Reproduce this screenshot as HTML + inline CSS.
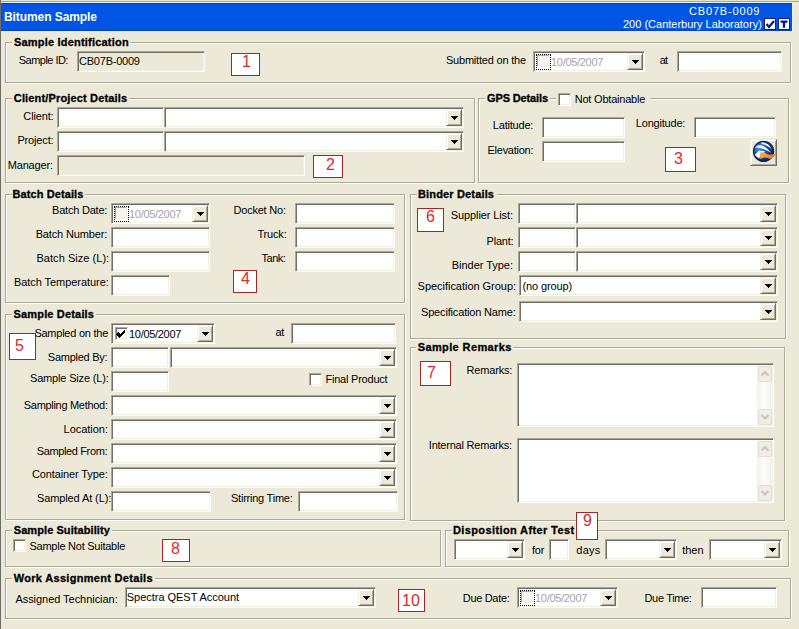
<!DOCTYPE html><html><head><meta charset="utf-8"><style>
*{box-sizing:border-box;margin:0;padding:0}
html,body{width:799px;height:629px;overflow:hidden;background:#ECE9D8;font-family:"Liberation Sans",sans-serif;font-size:11px;color:#000}
div{position:absolute}
.g{border:1px solid #ACA899;box-shadow:inset 1px 1px 0 #fff,1px 1px 0 #fff}
.gt{font-weight:bold;font-size:11px;line-height:13px;white-space:nowrap;-webkit-text-stroke:0.3px #000}
.lb{line-height:13px;white-space:nowrap}
.e{background:#fff;border:1px solid;border-color:#ACA899 #fff #fff #ACA899;box-shadow:inset 1px 1px 0 #716F64,inset -1px -1px 0 #F1EFE2}
.ed{background:#ECE9D8;border:1px solid;border-color:#ACA899 #fff #fff #ACA899;box-shadow:inset 1px 1px 0 #716F64,inset -1px -1px 0 #F1EFE2}
.b{background:#ECE9D8;border:1px solid;border-color:#F1EFE2 #716F64 #716F64 #F1EFE2;box-shadow:inset 1px 1px 0 #fff,inset -1px -1px 0 #ACA899}
.rb{background:#fff;border:1px solid #A82424}
.rd{color:#DC2A2A;font-size:16px;line-height:18px;white-space:nowrap}
.chk{width:13px;height:13px;background:#fff;border:1px solid;border-color:#ACA899 #fff #fff #ACA899;box-shadow:inset 1px 1px 0 #716F64,inset -1px -1px 0 #F1EFE2}
.cbd{width:12px;height:12px;background:#F5F4EF;border:1px solid;border-color:#ACA899 #F1EFE2 #F1EFE2 #ACA899}
.foc{border:1px dotted #000}
.hdr{background:#0055E5;border-top:1px solid #0046C0;border-bottom:1px solid #0044B4}
.ht{color:#fff;font-weight:bold;font-size:12px;line-height:13px;white-space:nowrap}
.hs{color:#fff;font-size:11px;line-height:13px;white-space:nowrap}
.hi{width:12px;height:12px;background:#fff;border:1px solid #0A1F78}
.sb{background:linear-gradient(90deg,#F3F1EA,#FDFDFB 50%,#F3F1EA)}
.sbb{left:1px;width:14px;height:16px;background:#EFEDE4;border:1px solid #E2E0D6;border-radius:2px}
</style></head><body>
<div style="left:0;top:0;width:799px;height:1px;background:#E6E3D3"></div>
<div style="left:0;top:1px;width:799px;height:1px;background:#A4A5A3"></div>
<div style="left:0;top:2px;width:793px;height:1px;background:#E4F2FA"></div>
<div style="left:792px;top:2px;width:1px;height:30px;background:#E4F2FA"></div>
<div class="hdr" style="left:1px;top:3px;width:791px;height:28px"></div>
<div style="left:1px;top:31px;width:792px;height:1px;background:#D8ECF6"></div>
<div style="left:0;top:0;width:1px;height:629px;background:#6F6E65"></div>
<div class="hi" style="left:764px;top:18px"><svg width="12" height="12" style="position:absolute;left:-1px;top:-1px"><path d="M2.5 6 L5 9 L10 3" stroke="#0A1F78" stroke-width="2.2" fill="none"/></svg></div>
<div class="hi" style="left:778px;top:18px"><svg width="12" height="12" style="position:absolute;left:-1px;top:-1px"><path d="M2.5 2.5h7v2.2h-2.3v5h-2.4v-5h-2.3z" fill="#0A1F78"/></svg></div>
<div class="g" style="left:5px;top:42px;width:786px;height:41px"></div>
<div class="g" style="left:5px;top:98px;width:470px;height:85px"></div>
<div class="g" style="left:478px;top:98px;width:311px;height:85px"></div>
<div class="g" style="left:5px;top:194px;width:400px;height:109px"></div>
<div class="g" style="left:410px;top:194px;width:376px;height:145px"></div>
<div class="g" style="left:5px;top:314px;width:400px;height:206px"></div>
<div class="g" style="left:410px;top:347px;width:375px;height:174px"></div>
<div class="g" style="left:5px;top:530px;width:436px;height:37px"></div>
<div class="g" style="left:445px;top:530px;width:344px;height:37px"></div>
<div class="g" style="left:5px;top:578px;width:786px;height:41px"></div>
<div style="left:12px;top:42px;width:118px;height:2px;background:#ECE9D8"></div><div style="left:12px;top:98px;width:117px;height:2px;background:#ECE9D8"></div><div style="left:485px;top:98px;width:65px;height:2px;background:#ECE9D8"></div><div style="left:556px;top:98px;width:94px;height:2px;background:#ECE9D8"></div><div style="left:12px;top:194px;width:73px;height:2px;background:#ECE9D8"></div><div style="left:417px;top:194px;width:80px;height:2px;background:#ECE9D8"></div><div style="left:12px;top:314px;width:84px;height:2px;background:#ECE9D8"></div><div style="left:416px;top:347px;width:97px;height:2px;background:#ECE9D8"></div><div style="left:12px;top:530px;width:100px;height:2px;background:#ECE9D8"></div><div style="left:452px;top:530px;width:124px;height:2px;background:#ECE9D8"></div><div style="left:12px;top:578px;width:143px;height:2px;background:#ECE9D8"></div>
<div class="ed" style="left:77px;top:51px;width:128px;height:21px"></div>
<div class="rb" style="left:231px;top:53px;width:29px;height:23px"></div>
<div class="rd" style="left:242px;top:53px">1</div>
<div class="e" style="left:533px;top:51px;width:112px;height:21px"></div>
<div class="cbd" style="left:537px;top:55px"></div>
<div class="foc" style="left:536px;top:54px;width:15px;height:16px"></div>
<div class="b" style="left:627px;top:53px;width:16px;height:17px"><svg width="16" height="17" style="position:absolute;left:-1px;top:-1px"><path d="M5 7h7v1h-1v1h-1v1h-1v1h-1v-1h-1v-1h-1v-1h-1z" fill="#000"/></svg></div>
<div class="e" style="left:677px;top:51px;width:105px;height:21px"></div>
<div class="e" style="left:57px;top:107px;width:107px;height:21px"></div>
<div class="e" style="left:164px;top:107px;width:300px;height:21px"></div>
<div class="b" style="left:446px;top:109px;width:16px;height:17px"><svg width="16" height="17" style="position:absolute;left:-1px;top:-1px"><path d="M5 7h7v1h-1v1h-1v1h-1v1h-1v-1h-1v-1h-1v-1h-1z" fill="#000"/></svg></div>
<div class="e" style="left:57px;top:131px;width:107px;height:21px"></div>
<div class="e" style="left:164px;top:131px;width:300px;height:21px"></div>
<div class="b" style="left:446px;top:133px;width:16px;height:17px"><svg width="16" height="17" style="position:absolute;left:-1px;top:-1px"><path d="M5 7h7v1h-1v1h-1v1h-1v1h-1v-1h-1v-1h-1v-1h-1z" fill="#000"/></svg></div>
<div class="ed" style="left:57px;top:155px;width:248px;height:21px"></div>
<div class="rb" style="left:313px;top:155px;width:30px;height:23px"></div>
<div class="rd" style="left:326px;top:156px">2</div>
<div class="chk" style="left:558px;top:93px"></div>
<div class="e" style="left:542px;top:117px;width:83px;height:21px"></div>
<div class="e" style="left:542px;top:141px;width:83px;height:21px"></div>
<div class="e" style="left:694px;top:117px;width:82px;height:21px"></div>
<div class="rb" style="left:665px;top:147px;width:31px;height:25px"></div>
<div class="rd" style="left:674px;top:150px">3</div>
<div class="b" style="left:750px;top:139px;width:27px;height:27px"><svg width="27" height="27" style="position:absolute;left:-1px;top:-1px" viewBox="0 0 27 27"><defs><radialGradient id="gl" cx="30%" cy="35%" r="70%"><stop offset="0" stop-color="#4A98DC"/><stop offset="0.45" stop-color="#1F62AE"/><stop offset="0.8" stop-color="#0F3878"/><stop offset="1" stop-color="#0A2558"/></radialGradient><linearGradient id="or" x1="0" y1="0" x2="1" y2="0"><stop offset="0" stop-color="#F8AE52"/><stop offset="1" stop-color="#EA7020"/></linearGradient></defs><circle cx="13.6" cy="12.4" r="10" fill="url(#gl)" stroke="#0A2456" stroke-width="1.3"/><path d="M11.5 3.3 Q18.5 3.6 22 10.5 Q17.5 5.8 11.5 4.9 Z" fill="#FFFFFF"/><path d="M4.8 8.6 Q9 4.3 14.6 7.8 Q18.2 10 21.2 13.8 Q17 11.6 14.6 10.6 Q9.5 7.9 4.8 8.6 Z" fill="#F2F8FF"/><path d="M9 11.8 L15 12.3 L14 13.8 L10.2 14 L9.6 19.6 Q6.5 18.2 4.8 15.8 Z" fill="#FFFFFF"/><path d="M9.7 13.5 L14.6 13.5 Q17.5 15.8 20 15.8 Q23 15.6 25.6 14.6 Q24.2 19 21 19.7 Q18.5 19.5 16.5 18.7 Q13 18.2 10.4 19.9 Z" fill="url(#or)"/></svg></div>
<div class="e" style="left:111px;top:203px;width:99px;height:21px"></div>
<div class="cbd" style="left:115px;top:207px"></div>
<div class="foc" style="left:114px;top:206px;width:15px;height:16px"></div>
<div class="b" style="left:192px;top:205px;width:16px;height:17px"><svg width="16" height="17" style="position:absolute;left:-1px;top:-1px"><path d="M5 7h7v1h-1v1h-1v1h-1v1h-1v-1h-1v-1h-1v-1h-1z" fill="#000"/></svg></div>
<div class="e" style="left:111px;top:227px;width:99px;height:21px"></div>
<div class="e" style="left:111px;top:251px;width:99px;height:21px"></div>
<div class="e" style="left:111px;top:275px;width:59px;height:21px"></div>
<div class="e" style="left:295px;top:203px;width:100px;height:21px"></div>
<div class="e" style="left:295px;top:227px;width:100px;height:21px"></div>
<div class="e" style="left:295px;top:251px;width:100px;height:21px"></div>
<div class="rb" style="left:233px;top:270px;width:24px;height:23px"></div>
<div class="rd" style="left:241px;top:270px">4</div>
<div class="rb" style="left:417px;top:208px;width:27px;height:24px"></div>
<div class="rd" style="left:426px;top:208px">6</div>
<div class="e" style="left:518px;top:203px;width:58px;height:21px"></div>
<div class="e" style="left:576px;top:203px;width:202px;height:21px"></div>
<div class="b" style="left:760px;top:205px;width:16px;height:17px"><svg width="16" height="17" style="position:absolute;left:-1px;top:-1px"><path d="M5 7h7v1h-1v1h-1v1h-1v1h-1v-1h-1v-1h-1v-1h-1z" fill="#000"/></svg></div>
<div class="e" style="left:518px;top:227px;width:58px;height:21px"></div>
<div class="e" style="left:576px;top:227px;width:202px;height:21px"></div>
<div class="b" style="left:760px;top:229px;width:16px;height:17px"><svg width="16" height="17" style="position:absolute;left:-1px;top:-1px"><path d="M5 7h7v1h-1v1h-1v1h-1v1h-1v-1h-1v-1h-1v-1h-1z" fill="#000"/></svg></div>
<div class="e" style="left:518px;top:251px;width:58px;height:21px"></div>
<div class="e" style="left:576px;top:251px;width:202px;height:21px"></div>
<div class="b" style="left:760px;top:253px;width:16px;height:17px"><svg width="16" height="17" style="position:absolute;left:-1px;top:-1px"><path d="M5 7h7v1h-1v1h-1v1h-1v1h-1v-1h-1v-1h-1v-1h-1z" fill="#000"/></svg></div>
<div class="e" style="left:519px;top:275px;width:259px;height:21px"></div>
<div class="b" style="left:760px;top:277px;width:16px;height:17px"><svg width="16" height="17" style="position:absolute;left:-1px;top:-1px"><path d="M5 7h7v1h-1v1h-1v1h-1v1h-1v-1h-1v-1h-1v-1h-1z" fill="#000"/></svg></div>
<div class="e" style="left:519px;top:301px;width:259px;height:21px"></div>
<div class="b" style="left:760px;top:303px;width:16px;height:17px"><svg width="16" height="17" style="position:absolute;left:-1px;top:-1px"><path d="M5 7h7v1h-1v1h-1v1h-1v1h-1v-1h-1v-1h-1v-1h-1z" fill="#000"/></svg></div>
<div class="rb" style="left:9px;top:333px;width:27px;height:27px"></div>
<div class="rd" style="left:15px;top:337px">5</div>
<div class="e" style="left:111px;top:323px;width:104px;height:21px"></div>
<div class="chk" style="left:115px;top:327px"><svg width="13" height="13" style="position:absolute;left:-1px;top:-1px"><path d="M3 5h1v1h1v1h1v-1h1v-1h1v-1h1v-1h1v3h-1v1h-1v1h-1v1h-1v1h-1v1h-1v-1h-1v-1h-1v-1h-1z" fill="#000"/></svg></div>
<div class="b" style="left:197px;top:325px;width:16px;height:17px"><svg width="16" height="17" style="position:absolute;left:-1px;top:-1px"><path d="M5 7h7v1h-1v1h-1v1h-1v1h-1v-1h-1v-1h-1v-1h-1z" fill="#000"/></svg></div>
<div class="e" style="left:291px;top:323px;width:105px;height:21px"></div>
<div class="e" style="left:111px;top:347px;width:58px;height:21px"></div>
<div class="e" style="left:170px;top:347px;width:227px;height:21px"></div>
<div class="b" style="left:379px;top:349px;width:16px;height:17px"><svg width="16" height="17" style="position:absolute;left:-1px;top:-1px"><path d="M5 7h7v1h-1v1h-1v1h-1v1h-1v-1h-1v-1h-1v-1h-1z" fill="#000"/></svg></div>
<div class="e" style="left:111px;top:371px;width:58px;height:21px"></div>
<div class="chk" style="left:309px;top:373px"></div>
<div class="e" style="left:111px;top:395px;width:286px;height:21px"></div>
<div class="b" style="left:379px;top:397px;width:16px;height:17px"><svg width="16" height="17" style="position:absolute;left:-1px;top:-1px"><path d="M5 7h7v1h-1v1h-1v1h-1v1h-1v-1h-1v-1h-1v-1h-1z" fill="#000"/></svg></div>
<div class="e" style="left:111px;top:419px;width:286px;height:21px"></div>
<div class="b" style="left:379px;top:421px;width:16px;height:17px"><svg width="16" height="17" style="position:absolute;left:-1px;top:-1px"><path d="M5 7h7v1h-1v1h-1v1h-1v1h-1v-1h-1v-1h-1v-1h-1z" fill="#000"/></svg></div>
<div class="e" style="left:111px;top:443px;width:286px;height:21px"></div>
<div class="b" style="left:379px;top:445px;width:16px;height:17px"><svg width="16" height="17" style="position:absolute;left:-1px;top:-1px"><path d="M5 7h7v1h-1v1h-1v1h-1v1h-1v-1h-1v-1h-1v-1h-1z" fill="#000"/></svg></div>
<div class="e" style="left:111px;top:467px;width:286px;height:21px"></div>
<div class="b" style="left:379px;top:469px;width:16px;height:17px"><svg width="16" height="17" style="position:absolute;left:-1px;top:-1px"><path d="M5 7h7v1h-1v1h-1v1h-1v1h-1v-1h-1v-1h-1v-1h-1z" fill="#000"/></svg></div>
<div class="e" style="left:111px;top:491px;width:100px;height:21px"></div>
<div class="e" style="left:298px;top:491px;width:100px;height:21px"></div>
<div class="rb" style="left:420px;top:361px;width:31px;height:25px"></div>
<div class="rd" style="left:427px;top:364px">7</div>
<div class="e" style="left:517px;top:363px;width:257px;height:64px"></div>
<div class="sb" style="left:757px;top:365px;width:15px;height:60px"><div class="sbb" style="top:1px"><svg width="14" height="16" style="position:absolute;left:-1px;top:-1px"><path d="M3.5 9.5 L7 6 L10.5 9.5" stroke="#C8C6BA" stroke-width="2" fill="none"/></svg></div><div class="sbb" style="bottom:0"><svg width="14" height="16" style="position:absolute;left:-1px;top:-1px"><path d="M3.5 6 L7 9.5 L10.5 6" stroke="#C8C6BA" stroke-width="2" fill="none"/></svg></div></div>
<div class="e" style="left:517px;top:438px;width:257px;height:65px"></div>
<div class="sb" style="left:757px;top:440px;width:15px;height:61px"><div class="sbb" style="top:1px"><svg width="14" height="16" style="position:absolute;left:-1px;top:-1px"><path d="M3.5 9.5 L7 6 L10.5 9.5" stroke="#C8C6BA" stroke-width="2" fill="none"/></svg></div><div class="sbb" style="bottom:0"><svg width="14" height="16" style="position:absolute;left:-1px;top:-1px"><path d="M3.5 6 L7 9.5 L10.5 6" stroke="#C8C6BA" stroke-width="2" fill="none"/></svg></div></div>
<div class="chk" style="left:13px;top:539px"></div>
<div class="rb" style="left:162px;top:539px;width:28px;height:23px"></div>
<div class="rd" style="left:171px;top:540px">8</div>
<div class="e" style="left:454px;top:539px;width:71px;height:21px"></div>
<div class="b" style="left:507px;top:541px;width:16px;height:17px"><svg width="16" height="17" style="position:absolute;left:-1px;top:-1px"><path d="M5 7h7v1h-1v1h-1v1h-1v1h-1v-1h-1v-1h-1v-1h-1z" fill="#000"/></svg></div>
<div class="e" style="left:549px;top:539px;width:20px;height:21px"></div>
<div class="e" style="left:605px;top:539px;width:72px;height:21px"></div>
<div class="b" style="left:659px;top:541px;width:16px;height:17px"><svg width="16" height="17" style="position:absolute;left:-1px;top:-1px"><path d="M5 7h7v1h-1v1h-1v1h-1v1h-1v-1h-1v-1h-1v-1h-1z" fill="#000"/></svg></div>
<div class="e" style="left:709px;top:539px;width:73px;height:21px"></div>
<div class="b" style="left:764px;top:541px;width:16px;height:17px"><svg width="16" height="17" style="position:absolute;left:-1px;top:-1px"><path d="M5 7h7v1h-1v1h-1v1h-1v1h-1v-1h-1v-1h-1v-1h-1z" fill="#000"/></svg></div>
<div class="e" style="left:125px;top:587px;width:251px;height:21px"></div>
<div class="b" style="left:358px;top:589px;width:16px;height:17px"><svg width="16" height="17" style="position:absolute;left:-1px;top:-1px"><path d="M5 7h7v1h-1v1h-1v1h-1v1h-1v-1h-1v-1h-1v-1h-1z" fill="#000"/></svg></div>
<div class="rb" style="left:398px;top:589px;width:27px;height:23px"></div>
<div class="rd" style="left:402px;top:592px">10</div>
<div class="e" style="left:517px;top:587px;width:101px;height:21px"></div>
<div class="cbd" style="left:521px;top:591px"></div>
<div class="foc" style="left:520px;top:590px;width:15px;height:16px"></div>
<div class="b" style="left:600px;top:589px;width:16px;height:17px"><svg width="16" height="17" style="position:absolute;left:-1px;top:-1px"><path d="M5 7h7v1h-1v1h-1v1h-1v1h-1v-1h-1v-1h-1v-1h-1z" fill="#000"/></svg></div>
<div class="e" style="left:701px;top:587px;width:76px;height:21px"></div>
<div class="rb" style="left:576px;top:512px;width:22px;height:28px"></div>
<div class="rd" style="left:583px;top:512px">9</div>
<div class="ht" style="left:4.00px;top:11px;letter-spacing:-0.077px;">Bitumen Sample</div>
<div class="hs" style="left:689.00px;top:5px;letter-spacing:0.833px;">CB07B-0009</div>
<div class="hs" style="left:623.00px;top:18px;">200 (Canterbury Laboratory)</div>
<div class="gt" style="left:14.00px;top:36px;letter-spacing:0.2px;">Sample Identification</div>
<div class="lb" style="left:18.80px;top:54px;letter-spacing:-0.533px;">Sample ID:</div>
<div class="lb" style="left:445.90px;top:54px;letter-spacing:-0.193px;">Submitted on the</div>
<div class="lb" style="left:659.70px;top:54px;letter-spacing:-0.7px;">at</div>
<div class="gt" style="left:13.80px;top:92px;letter-spacing:0.152px;">Client/Project Details</div>
<div class="lb" style="right:745.5px;top:110px;letter-spacing:-0.15px">Client:</div>
<div class="lb" style="right:745.5px;top:134px;letter-spacing:-0.15px">Project:</div>
<div class="lb" style="left:7.70px;top:159px;letter-spacing:-0.171px;">Manager:</div>
<div class="gt" style="left:487.00px;top:92px;letter-spacing:-0.13px;">GPS Details</div>
<div class="lb" style="left:574.70px;top:93px;letter-spacing:-0.208px;">Not Obtainable</div>
<div class="lb" style="left:492.80px;top:119px;letter-spacing:-0.2px;">Latitude:</div>
<div class="lb" style="left:487.50px;top:144px;letter-spacing:-0.256px;">Elevation:</div>
<div class="lb" style="left:635.80px;top:117px;letter-spacing:-0.2px;">Longitude:</div>
<div class="gt" style="left:12.50px;top:188px;letter-spacing:0.092px;">Batch Details</div>
<div class="lb" style="left:52.00px;top:204px;letter-spacing:-0.21px;">Batch Date:</div>
<div class="lb" style="left:35.70px;top:228px;letter-spacing:-0.15px;">Batch Number:</div>
<div class="lb" style="left:36.50px;top:252px;letter-spacing:0.036px;">Batch Size (L):</div>
<div class="lb" style="left:13.90px;top:276px;letter-spacing:-0.053px;">Batch Temperature:</div>
<div class="lb" style="left:233.50px;top:204px;letter-spacing:-0.211px;">Docket No:</div>
<div class="lb" style="left:257.40px;top:228px;letter-spacing:-0.16px;">Truck:</div>
<div class="lb" style="left:261.50px;top:252px;letter-spacing:-0.475px;">Tank:</div>
<div class="gt" style="left:418.00px;top:188px;letter-spacing:0.154px;">Binder Details</div>
<div class="lb" style="left:450.80px;top:209px;letter-spacing:-0.108px;">Supplier List:</div>
<div class="lb" style="left:486.60px;top:235px;letter-spacing:-0.24px;">Plant:</div>
<div class="lb" style="left:451.80px;top:259px;letter-spacing:-0.036px;">Binder Type:</div>
<div class="lb" style="left:417.60px;top:280px;letter-spacing:-0.032px;">Specification Group:</div>
<div class="lb" style="left:421.00px;top:306px;letter-spacing:-0.167px;">Specification Name:</div>
<div class="gt" style="left:13.50px;top:308px;letter-spacing:0.169px;">Sample Details</div>
<div class="lb" style="left:34.40px;top:327px;letter-spacing:-0.246px;">Sampled on the</div>
<div class="lb" style="left:275.60px;top:326px;letter-spacing:-0.4px;">at</div>
<div class="lb" style="left:47.80px;top:351px;letter-spacing:-0.25px;">Sampled By:</div>
<div class="lb" style="left:30.00px;top:372px;letter-spacing:-0.173px;">Sample Size (L):</div>
<div class="lb" style="left:325.50px;top:373px;letter-spacing:-0.225px;">Final Product</div>
<div class="lb" style="left:23.80px;top:399px;letter-spacing:-0.3px;">Sampling Method:</div>
<div class="lb" style="left:63.60px;top:423px;letter-spacing:-0.037px;">Location:</div>
<div class="lb" style="left:36.80px;top:445px;letter-spacing:-0.375px;">Sampled From:</div>
<div class="lb" style="left:31.90px;top:468px;letter-spacing:-0.114px;">Container Type:</div>
<div class="lb" style="left:36.90px;top:492px;letter-spacing:-0.1px;">Sampled At (L):</div>
<div class="lb" style="left:231.00px;top:492px;letter-spacing:-0.231px;">Stirring Time:</div>
<div class="gt" style="left:417.70px;top:341px;letter-spacing:0.385px;">Sample Remarks</div>
<div class="lb" style="left:466.60px;top:364px;letter-spacing:-0.186px;">Remarks:</div>
<div class="lb" style="left:428.80px;top:439px;letter-spacing:-0.219px;">Internal Remarks:</div>
<div class="gt" style="left:13.75px;top:524px;letter-spacing:0.074px;">Sample Suitability</div>
<div class="lb" style="left:29.50px;top:540px;letter-spacing:-0.25px;">Sample Not Suitable</div>
<div class="gt" style="left:453.00px;top:524px;letter-spacing:0.381px;">Disposition After Test</div>
<div class="lb" style="left:531.90px;top:544px;letter-spacing:-0.1px;">for</div>
<div class="lb" style="left:576.30px;top:544px;letter-spacing:0.233px;">days</div>
<div class="lb" style="left:682.20px;top:544px;letter-spacing:-0.033px;">then</div>
<div class="gt" style="left:13.75px;top:572px;letter-spacing:0.307px;">Work Assignment Details</div>
<div class="lb" style="left:15.40px;top:593px;letter-spacing:-0.042px;">Assigned Technician:</div>
<div class="lb" style="left:462.75px;top:592px;letter-spacing:-0.312px;">Due Date:</div>
<div class="lb" style="left:644.50px;top:592px;letter-spacing:-0.338px;">Due Time:</div>
<div class="lb" style="left:79.00px;top:55px;letter-spacing:-0.222px;">CB07B-0009</div>
<div class="lb" style="left:522.50px;top:280px;letter-spacing:-0.122px;">(no group)</div>
<div class="lb" style="left:126.80px;top:591px;letter-spacing:-0.032px;">Spectra QEST Account</div>
<div class="lb" style="left:551px;top:56px;color:#A3A3A3;letter-spacing:-0.3px">10/05/2007</div>
<div class="lb" style="left:129px;top:328px;color:#000;letter-spacing:-0.3px">10/05/2007</div>
<div class="lb" style="left:129px;top:208px;color:#A3A3A3;letter-spacing:-0.3px">10/05/2007</div>
<div class="lb" style="left:535px;top:592px;color:#A3A3A3;letter-spacing:-0.3px">10/05/2007</div>
</body></html>
